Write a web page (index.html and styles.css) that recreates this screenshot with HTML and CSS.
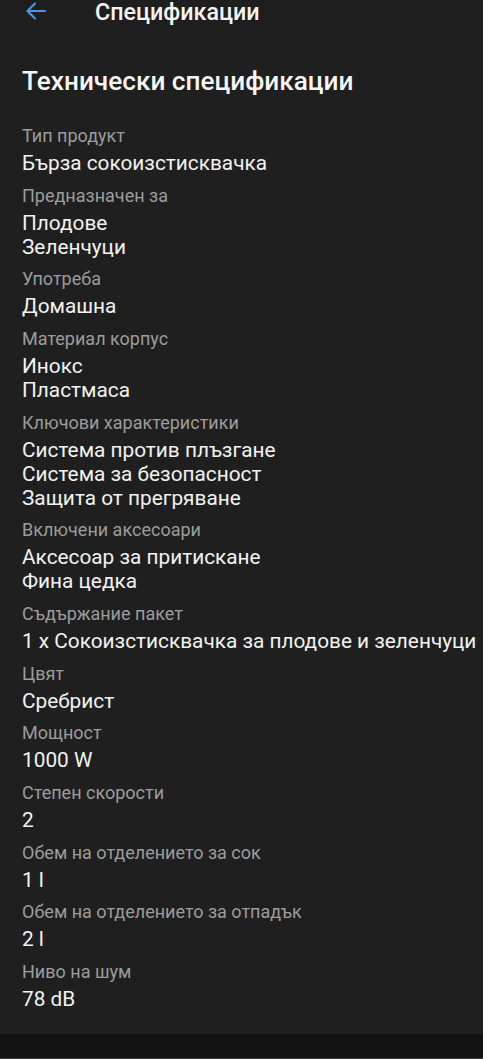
FILE: index.html
```html
<!DOCTYPE html>
<html lang="bg">
<head>
<meta charset="utf-8">
<link rel="stylesheet" href="styles.css">
</head>
<body>
<header class="topbar">
  <svg class="back" width="24" height="24" viewBox="0 0 24 24"><path d="M21 12H4M11 4.5L3.5 12 11 19.5" fill="none" stroke="#4a94e0" stroke-width="2.2" stroke-linecap="round" stroke-linejoin="round"/></svg>
  <span class="title">Спецификации</span>
</header>
<main class="card">
  <h1 class="heading">Технически спецификации</h1>
  <div class="specs">
    <div class="spec"><div class="label">Тип продукт</div><div class="vals"><div>Бърза сокоизстисквачка</div></div></div>
    <div class="spec"><div class="label">Предназначен за</div><div class="vals"><div>Плодове</div><div>Зеленчуци</div></div></div>
    <div class="spec"><div class="label">Употреба</div><div class="vals"><div>Домашна</div></div></div>
    <div class="spec"><div class="label">Материал корпус</div><div class="vals"><div>Инокс</div><div>Пластмаса</div></div></div>
    <div class="spec"><div class="label">Ключови характеристики</div><div class="vals"><div>Система против плъзгане</div><div>Система за безопасност</div><div>Защита от прегряване</div></div></div>
    <div class="spec"><div class="label">Включени аксесоари</div><div class="vals"><div>Аксесоар за притискане</div><div>Фина цедка</div></div></div>
    <div class="spec"><div class="label">Съдържание пакет</div><div class="vals"><div>1 х Сокоизстисквачка за плодове и зеленчуци</div></div></div>
    <div class="spec"><div class="label">Цвят</div><div class="vals"><div>Сребрист</div></div></div>
    <div class="spec"><div class="label">Мощност</div><div class="vals"><div>1000 W</div></div></div>
    <div class="spec"><div class="label">Степен скорости</div><div class="vals"><div>2</div></div></div>
    <div class="spec"><div class="label">Обем на отделението за сок</div><div class="vals"><div>1 l</div></div></div>
    <div class="spec"><div class="label">Обем на отделението за отпадък</div><div class="vals"><div>2 l</div></div></div>
    <div class="spec"><div class="label">Ниво на шум</div><div class="vals"><div>78 dB</div></div></div>
  </div>
</main>
<div class="bottom"></div>
<div class="navline"></div>
</body>
</html>
```
FILE: styles.css
```css
html, body {
  margin: 0;
  padding: 0;
  background: #121212;
}
body {
  font-family: Roboto, "Noto Sans", sans-serif;
  color: #f2f2f2;
  width: 483px;
  display: flex;
  flex-direction: column;
}
.topbar {
  flex-shrink: 0;
  background: #1e1e1e;
  height: 32px;
  display: flex;
  align-items: flex-start;
  padding-left: 24px;
}
.back {
  margin-top: -1px;
}
.title {
  margin-left: 47px;
  font-size: 23.3px;
  font-weight: 500;
  line-height: 24px;
  color: #f4f4f4;
}
.card {
  flex-shrink: 0;
  background: #1f1f1f;
  padding: 33px 22px 23px;
}
.heading {
  margin: 0;
  font-size: 26.2px;
  font-weight: 500;
  line-height: 32px;
  color: #f6f6f6;
}
.specs {
  margin-top: 28px;
  display: flex;
  flex-direction: column;
  gap: 9.67px;
}
.label {
  font-size: 18px;
  line-height: 22px;
  color: #9c9c9c;
}
.vals {
  margin-top: 4px;
  font-size: 20.8px;
  line-height: 24px;
  color: #f2f2f2;
  white-space: nowrap;
}
.bottom {
  flex-shrink: 0;
  height: 24px;
  background: #121212;
}
.navline {
  flex-shrink: 0;
  height: 3px;
  background: #3c3c3c;
}
```
